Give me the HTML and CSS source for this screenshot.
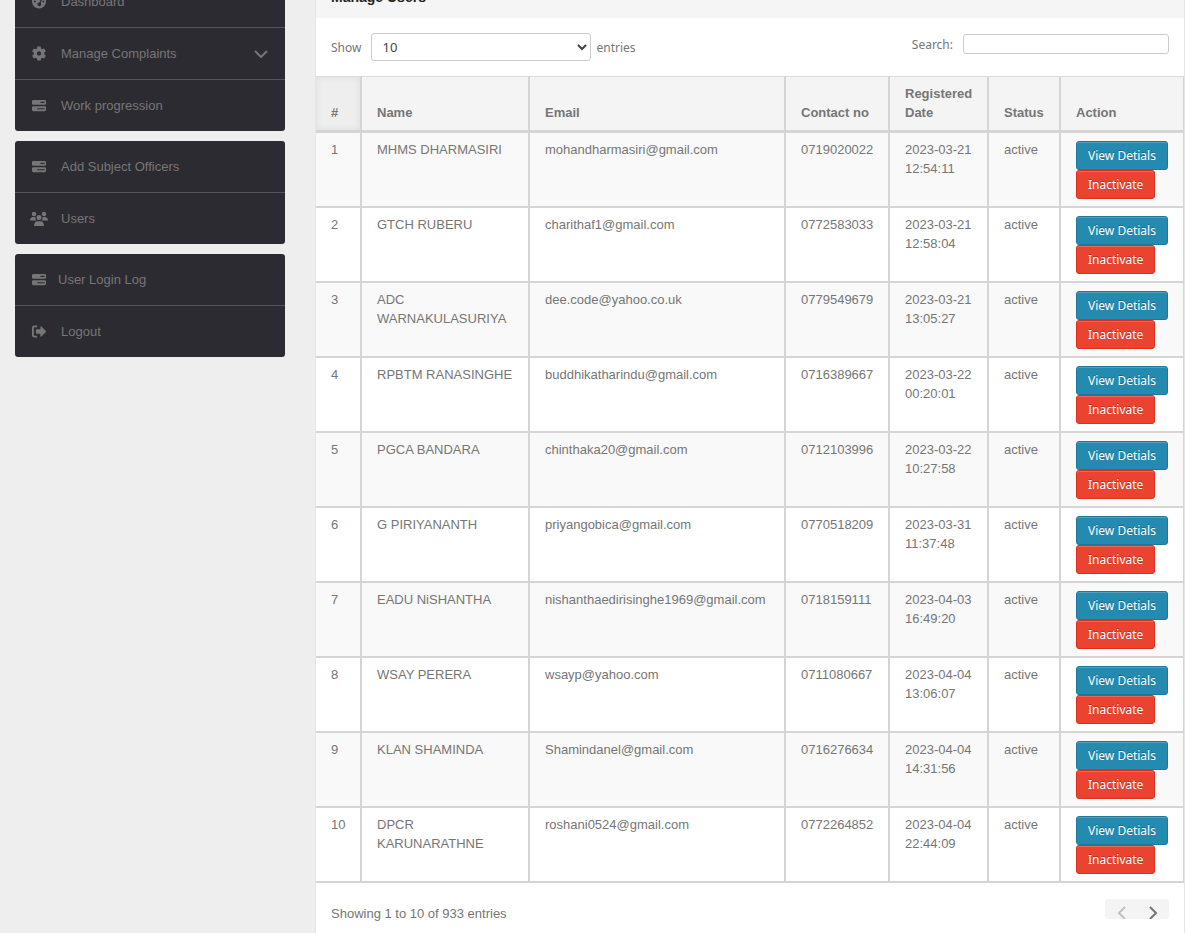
FILE: index.html
```html
<!DOCTYPE html>
<html lang="en">
<head>
<meta charset="utf-8">
<meta name="viewport" content="width=device-width, initial-scale=1">
<title>Manage Users</title>
<link rel="stylesheet" href="styles.css">
</head>
<body>
<svg class="defs" aria-hidden="true">
  <symbol id="server" viewBox="0 0 16 16"><path fill-rule="evenodd" d="M2 2h12a1.500 1.500 0 0 1 1.500 1.500v2.300A1.500 1.500 0 0 1 14 7.300H2A1.500 1.500 0 0 1 .5 5.800V3.500A1.500 1.500 0 0 1 2 2zM9.500 4v1.200H14V4zM2 8.700h12a1.500 1.500 0 0 1 1.500 1.500v2.300a1.500 1.500 0 0 1-1.500 1.500H2A1.500 1.500 0 0 1 .5 12.500v-2.300A1.500 1.500 0 0 1 2 8.700zM6 10.800v1.200h8v-1.200z"/></symbol>
</svg>
<div class="page">
  <nav class="sidebar">
    <ul class="menu">
      <li><a href="#"><svg class="icon" viewBox="0 0 16 16"><path fill-rule="evenodd" d="M8 .5a7.500 7.500 0 1 0 0 15 7.500 7.500 0 0 0 0-15zM3.500 7a1 1 0 1 1 0 2 1 1 0 0 1 0-2zm1.300-3.200a1 1 0 1 1 0 2 1 1 0 0 1 0-2zM8 2.300a1 1 0 1 1 0 2 1 1 0 0 1 0-2zM10.700 4l1 .5-2 5a2 2 0 1 1-1.200-.5zM12.500 7a1 1 0 1 1 0 2 1 1 0 0 1 0-2z"/></svg><span>Dashboard</span></a></li>
      <li><a href="#"><svg class="icon" viewBox="0 0 16 16"><path fill-rule="evenodd" d="M6.300.5h3.400l.5 2.200 1.200.7 2.200-.7 1.700 2.900-1.700 1.600v1.600l1.700 1.600-1.700 2.900-2.200-.7-1.200.7-.5 2.200H6.300l-.5-2.200-1.200-.7-2.200.7L.7 10.400l1.700-1.600V7.200L.7 5.600l1.700-2.900 2.200.7 1.200-.7zM8 5.700a2.300 2.300 0 1 0 0 4.600 2.300 2.300 0 0 0 0-4.600z"/></svg><span>Manage Complaints</span><svg class="caret" viewBox="0 0 14 8"><path d="M1 1l6 6 6-6"/></svg></a></li>
      <li><a href="#"><svg class="icon"><use href="#server"/></svg><span>Work progression</span></a></li>
    </ul>
    <ul class="menu">
      <li><a href="#"><svg class="icon"><use href="#server"/></svg><span>Add Subject Officers</span></a></li>
      <li><a href="#"><svg class="icon wide" viewBox="0 0 18 16"><circle cx="4" cy="3" r="2.200"/><circle cx="14" cy="3" r="2.200"/><circle cx="9" cy="6.500" r="2.500"/><path d="M0 9.500C0 7.200 1.400 6 3 6h2.300l.3 2q.2 1 .9 1.500zM18 9.500C18 7.200 16.600 6 15 6h-2.300l-.3 2q-.2 1-.9 1.500zM4 15c0-3 1.500-4.800 3.500-4.800h3C12.500 10.200 14 12 14 15z"/></svg><span>Users</span></a></li>
    </ul>
    <ul class="menu">
      <li><a class="close" href="#"><svg class="icon"><use href="#server"/></svg><span>User Login Log</span></a></li>
      <li><a href="#"><svg class="icon" viewBox="0 0 16 16"><path d="M6 1.500v2H3.500q-1 0-1 1v7q0 1 1 1H6v2H3Q.5 14.500.5 12V4Q.5 1.500 3 1.500zM9.500 3.200q0-1.200 1-.5l4.600 4.600q.6.700 0 1.400l-4.600 4.600q-1 .7-1-.5V10.500h-4q-.8 0-.8-.8V6.300q0-.8.8-.8h4z"/></svg><span>Logout</span></a></li>
    </ul>
  </nav>
  <main class="module">
    <h1 class="title">Manage Users</h1>
    <div class="controls">
      <label class="length">Show
        <select><option>10</option><option>25</option><option>50</option><option>100</option></select>
        entries</label>
      <label class="search">Search: <input type="text"></label>
    </div>
    <table class="users">
      <colgroup><col class="c-num"><col class="c-name"><col><col class="c-contact"><col class="c-date"><col class="c-status"><col class="c-action"></colgroup>
      <thead>
        <tr><th class="sorted">#</th><th>Name</th><th>Email</th><th>Contact no</th><th>Registered Date</th><th>Status</th><th>Action</th></tr>
      </thead>
      <tbody>
        <tr><td>1</td><td>MHMS DHARMASIRI</td><td>mohandharmasiri@gmail.com</td><td>0719020022</td><td>2023-03-21 12:54:11</td><td>active</td><td class="actions"><button class="btn view">View Detials</button><button class="btn off">Inactivate</button></td></tr>
        <tr><td>2</td><td>GTCH RUBERU</td><td>charithaf1@gmail.com</td><td>0772583033</td><td>2023-03-21 12:58:04</td><td>active</td><td class="actions"><button class="btn view">View Detials</button><button class="btn off">Inactivate</button></td></tr>
        <tr><td>3</td><td>ADC WARNAKULASURIYA</td><td>dee.code@yahoo.co.uk</td><td>0779549679</td><td>2023-03-21 13:05:27</td><td>active</td><td class="actions"><button class="btn view">View Detials</button><button class="btn off">Inactivate</button></td></tr>
        <tr><td>4</td><td>RPBTM RANASINGHE</td><td>buddhikatharindu@gmail.com</td><td>0716389667</td><td>2023-03-22 00:20:01</td><td>active</td><td class="actions"><button class="btn view">View Detials</button><button class="btn off">Inactivate</button></td></tr>
        <tr><td>5</td><td>PGCA BANDARA</td><td>chinthaka20@gmail.com</td><td>0712103996</td><td>2023-03-22 10:27:58</td><td>active</td><td class="actions"><button class="btn view">View Detials</button><button class="btn off">Inactivate</button></td></tr>
        <tr><td>6</td><td>G PIRIYANANTH</td><td>priyangobica@gmail.com</td><td>0770518209</td><td>2023-03-31 11:37:48</td><td>active</td><td class="actions"><button class="btn view">View Detials</button><button class="btn off">Inactivate</button></td></tr>
        <tr><td>7</td><td>EADU NiSHANTHA</td><td>nishanthaedirisinghe1969@gmail.com</td><td>0718159111</td><td>2023-04-03 16:49:20</td><td>active</td><td class="actions"><button class="btn view">View Detials</button><button class="btn off">Inactivate</button></td></tr>
        <tr><td>8</td><td>WSAY PERERA</td><td>wsayp@yahoo.com</td><td>0711080667</td><td>2023-04-04 13:06:07</td><td>active</td><td class="actions"><button class="btn view">View Detials</button><button class="btn off">Inactivate</button></td></tr>
        <tr><td>9</td><td>KLAN SHAMINDA</td><td>Shamindanel@gmail.com</td><td>0716276634</td><td>2023-04-04 14:31:56</td><td>active</td><td class="actions"><button class="btn view">View Detials</button><button class="btn off">Inactivate</button></td></tr>
        <tr><td>10</td><td>DPCR KARUNARATHNE</td><td>roshani0524@gmail.com</td><td>0772264852</td><td>2023-04-04 22:44:09</td><td>active</td><td class="actions"><button class="btn view">View Detials</button><button class="btn off">Inactivate</button></td></tr>
      </tbody>
    </table>
    <div class="footer">
      <span>Showing 1 to 10 of 933 entries</span>
      <div class="pager">
        <button class="prev" aria-label="Previous" disabled><svg viewBox="0 0 9 14"><path d="M8 1L2 7l6 6"/></svg></button>
        <button aria-label="Next"><svg viewBox="0 0 9 14"><path d="M1 1l6 6-6 6"/></svg></button>
      </div>
    </div>
  </main>
</div>
</body>
</html>
```
FILE: styles.css
```css
* { box-sizing: border-box; }
html, body { height: 100%; }
body {
  margin: 0;
  overflow: hidden;
  background: #eeeeee;
  color: #767676;
  font: 13px/19px "Liberation Sans", Arial, sans-serif;
}
.defs { display: none; }
/* The view is scrolled a little way down the page. */
.page {
  display: flex;
  align-items: flex-start;
  gap: 30px;
  margin-top: -24px;
  padding-left: 15px;
}
.sidebar { flex: 0 0 270px; }
.menu {
  margin: 0 0 10px;
  padding: 0;
  list-style: none;
  background: #2d2b32;
  border-radius: 3px;
}
.menu li + li { border-top: 1px solid #55545a; }
.menu a {
  display: flex;
  align-items: center;
  gap: 13px;
  height: 51px;
  padding: 0 17px 0 15px;
  color: #767676;
  text-decoration: none;
}
.menu a.close { gap: 10px; }
.icon {
  flex: none;
  width: 18px;
  height: 15px;
  fill: #767676;
}
.icon.wide { height: 16px; }
.caret {
  width: 14px;
  height: 8px;
  margin-left: auto;
  fill: none;
  stroke: #767676;
  stroke-width: 2;
}
.module {
  flex: 1;
  min-width: 0;
  min-height: calc(100vh + 24px);
  background: #fff;
  border: 1px solid #e5e5e5;
  border-top: 0;
}
.title {
  display: flex;
  align-items: center;
  height: 42px;
  margin: 0;
  padding: 0 15px;
  background: #f5f5f5;
  color: #222;
  font-size: 14px;
}
.controls {
  display: flex;
  justify-content: space-between;
  align-items: flex-start;
  height: 58px;
  padding: 15px 15px 0;
  font-family: "Noto Sans", sans-serif;
  font-size: 12px;
}
.length, .search { display: flex; align-items: center; }
.length { gap: 5px; }
.length select {
  width: 220px;
  height: 28px;
  margin-left: 5px;
  padding: 0 6px;
  border: 1px solid #ccc;
  border-radius: 3px;
  background: #fff;
  color: #444;
  font: 13px/19px "Noto Sans", sans-serif;
}
.search { gap: 10px; padding-top: 1px; }
.search input {
  width: 206px;
  height: 20px;
  padding: 0 6px;
  border: 1px solid #ccc;
  border-radius: 3px;
  font: inherit;
}
.users {
  width: 100%;
  table-layout: fixed;
  border-collapse: separate;
  border-spacing: 0;
  border-top: 1px solid #dcdcdc;
}
.c-num { width: 46px; }
.c-name { width: 168px; }
.c-contact { width: 104px; }
.c-date { width: 99px; }
.c-status { width: 72px; }
.c-action { width: 123px; }
.users th, .users td {
  border-right: 2px solid #d5d5d5;
  border-bottom: 2px solid #d5d5d5;
  text-align: left;
}
.users th {
  padding: 7px 10px 8px 15px;
  border-bottom-width: 3px;
  background: #f4f4f4;
  vertical-align: bottom;
}
.users th.sorted { box-shadow: inset 0 0 6px #dcdcdc; background: #eee; }
.users td { padding: 7px 10px 7px 15px; vertical-align: top; }
.users tr > :last-child { border-right-width: 1px; }
.users tbody tr:nth-child(odd) { background: #f9f9f9; }
.users td.actions { padding: 8px 0 7px 15px; }
.btn {
  display: block;
  height: 29px;
  padding: 0 11px;
  border: 1px solid;
  border-radius: 3px;
  color: #fff;
  font: 12px/18px "Noto Sans", sans-serif;
  text-shadow: 0 -1px 0 rgba(0, 0, 0, .25);
  box-shadow: inset 0 1px 0 rgba(255, 255, 255, .2);
}
.btn.view { background: #248aaf; border-color: #1f7897; }
.btn.off { background: #ea4330; border-color: #dc2f1c; }
.footer {
  display: flex;
  justify-content: space-between;
  align-items: flex-start;
  padding: 16px 15px;
}
.footer span { padding-top: 5px; }
.pager {
  display: flex;
  height: 20px;
  overflow: hidden;
  background: #f4f4f4;
  border-radius: 3px;
}
.pager button {
  width: 32px;
  height: 28px;
  padding: 0;
  border: 0;
  background: none;
}
.pager svg {
  display: block;
  width: 9px;
  height: 14px;
  margin: 0 auto;
  fill: none;
  stroke: #767676;
  stroke-width: 2;
}
.pager .prev svg { stroke: #c0c0c0; }
```
